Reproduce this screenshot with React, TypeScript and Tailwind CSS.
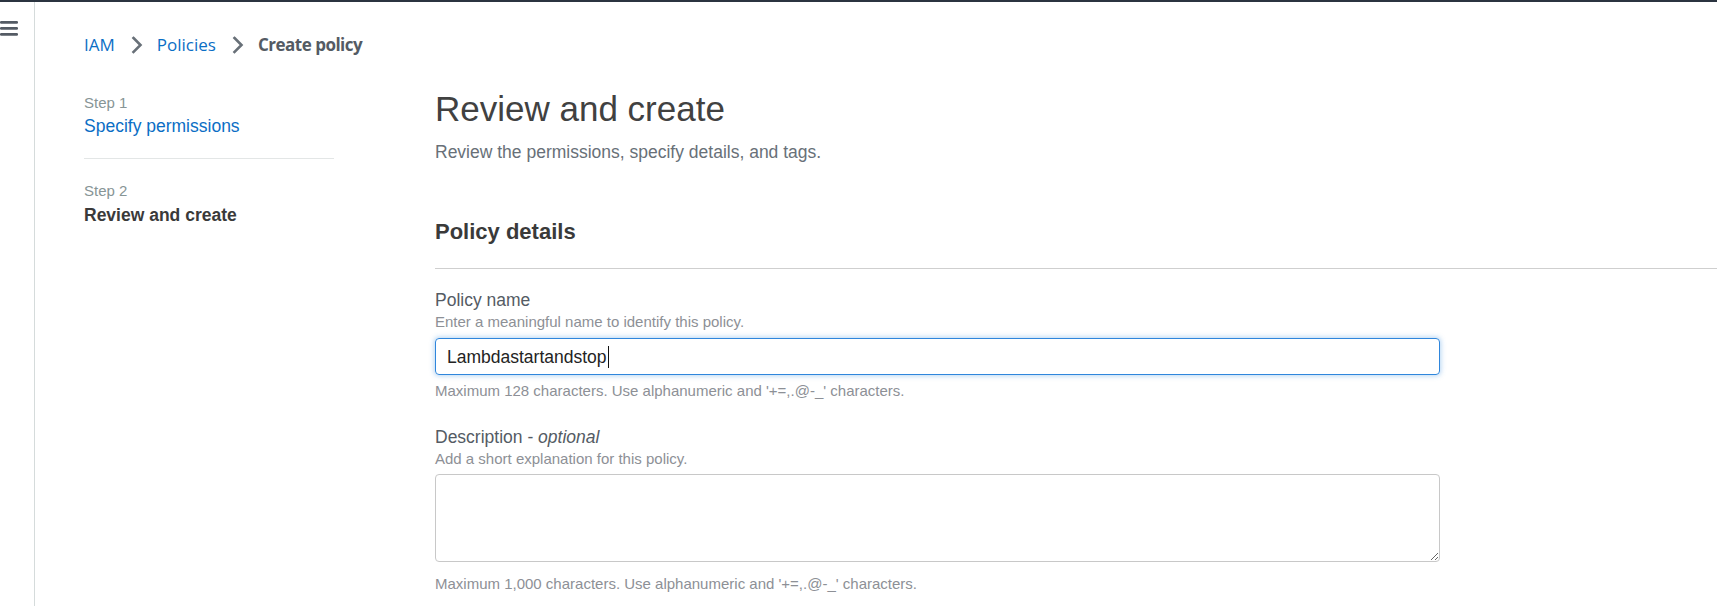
import React from "react";

const arial = "font-['Liberation_Sans',Arial,sans-serif]";

function Chevron() {
  return (
    <svg width="12" height="18" viewBox="0 0 12 18" className="ml-4 mr-[14px] shrink-0">
      <path d="M2.5 2 L9.5 9 L2.5 16" fill="none" stroke="#687078" strokeWidth="2.6" strokeLinecap="square" />
    </svg>
  );
}

function Hamburger() {
  return (
    <svg width="18" height="15" viewBox="0 0 18 15" className="mt-[19px]">
      <rect x="0" y="0" width="18" height="2.8" rx="1.2" fill="#545b64" />
      <rect x="0" y="6" width="18" height="2.8" rx="1.2" fill="#545b64" />
      <rect x="0" y="12" width="18" height="2.8" rx="1.2" fill="#545b64" />
    </svg>
  );
}

export default function App() {
  return (
    <div className={`min-h-screen bg-white ${arial}`}>
      <div className="h-[2px] bg-[#2b3440]" />
      <div className="flex min-h-[604px]">
        <aside className="w-[35px] shrink-0 overflow-hidden border-r border-[#d5dbdb]">
          <Hamburger />
        </aside>

        <div className="flex-1 pl-[49px]">
          <nav className="flex items-center pt-[31px] font-['Open_Sans',sans-serif] text-[17px] leading-[24px]">
            <a className="text-[#0b6ec5]">IAM</a>
            <Chevron />
            <a className="text-[#0b6ec5]">Policies</a>
            <Chevron />
            <span className="font-bold tracking-[-0.5px] text-[#545b64]">Create policy</span>
          </nav>

          <div className="mt-[31px] flex">
            <div className="w-[250px] shrink-0 pt-[5px]">
              <div className="text-[15px] leading-[20px] text-[#879596]">Step 1</div>
              <div className="mt-[2px] text-[17.5px] leading-[22px] text-[#0b6ec5]">Specify permissions</div>
              <div className="mt-[21px] h-px bg-[#e3e6e6]" />
              <div className="mt-[22px] text-[15px] leading-[20px] text-[#879596]">Step 2</div>
              <div className="mt-[3px] text-[17.5px] font-bold leading-[22px] text-[#3a3a3a]">Review and create</div>
            </div>

            <main className="ml-[101px] flex-1">
              <h1 className="text-[35px] leading-[42px] text-[#414141]">Review and create</h1>
              <p className="mt-[10px] text-[17.5px] leading-[24px] text-[#687078]">
                Review the permissions, specify details, and tags.
              </p>

              <h2 className="mt-[54px] text-[22px] font-bold leading-[28px] text-[#3a3a3a]">Policy details</h2>
              <div className="mt-[22px] h-px bg-[#cfcfcf]" />

              <div className="mt-[20px] text-[17.5px] leading-[22px] text-[#545b64]">Policy name</div>
              <div className="mt-px text-[15px] leading-[20px] text-[#8d9096]">
                Enter a meaningful name to identify this policy.
              </div>
              <div className="mt-[6px] flex h-[37px] w-[1005px] items-center rounded-[4px] border border-[#2f86dc] px-[11px] shadow-[0_0_5px_1px_rgba(47,134,220,0.35)]">
                <span className="text-[17.5px] leading-[22px] text-[#232323]">Lambdastartandstop</span>
                <span className="ml-px h-[22px] w-px bg-[#111]" />
              </div>
              <div className="mt-[6px] text-[15px] leading-[20px] text-[#8d9096]">
                Maximum 128 characters. Use alphanumeric and '+=,.@-_' characters.
              </div>

              <div className="mt-[25px] text-[17.5px] leading-[22px] text-[#545b64]">
                Description - <span className="italic">optional</span>
              </div>
              <div className="mt-px text-[15px] leading-[20px] text-[#8d9096]">
                Add a short explanation for this policy.
              </div>
              <textarea
                className="mt-[5px] block h-[88px] w-[1005px] rounded-[4px] border border-[#c8c8c8] bg-white px-[11px] py-[6px] text-[17.5px] outline-none"
                defaultValue=""
              />
              <div className="mt-[12px] text-[15px] leading-[20px] text-[#8d9096]">
                Maximum 1,000 characters. Use alphanumeric and '+=,.@-_' characters.
              </div>
            </main>
          </div>
        </div>
      </div>
    </div>
  );
}
